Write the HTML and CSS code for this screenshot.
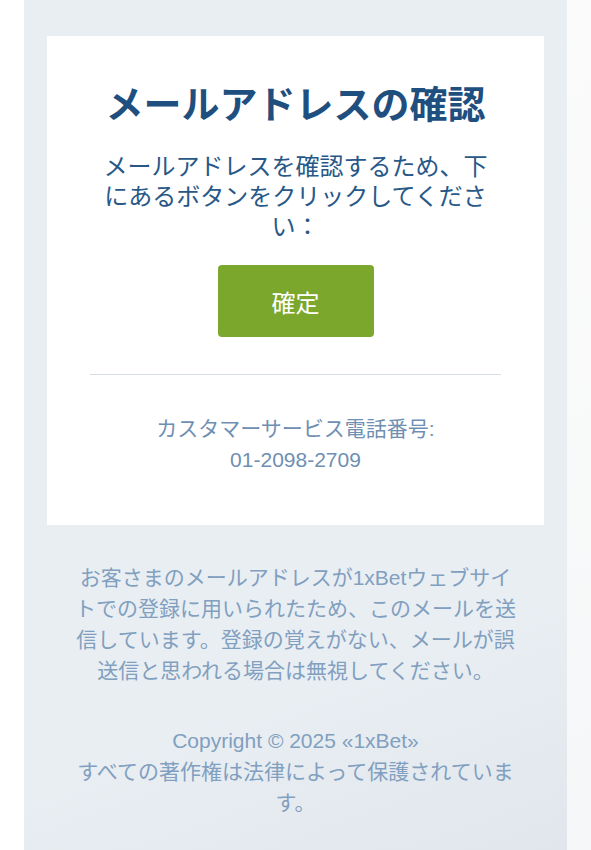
FILE: index.html
```html
<!DOCTYPE html>
<html lang="ja">
<head>
<meta charset="utf-8">
<title>メールアドレスの確認</title>
<link rel="stylesheet" href="styles.css">
</head>
<body>
<div class="page">
  <div class="wrap">
    <div class="card">
      <h1 class="title">メールアドレスの確認</h1>
      <p class="lead">メールアドレスを確認するため、下にあるボタンをクリックしてください：</p>
      <div class="btn-row"><a class="btn" href="#">確定</a></div>
      <hr class="divider">
      <p class="support">カスタマーサービス電話番号:<br>01-2098-2709</p>
    </div>
    <div class="footer">
      <p class="note">お客さまのメールアドレスが1xBetウェブサイトでの登録に用いられたため、このメールを送信しています。登録の覚えがない、メールが誤送信と思われる場合は無視してください。</p>
      <p class="copy">Copyright © 2025 «1xBet»<br>すべての著作権は法律によって保護されています。</p>
    </div>
  </div>
  <div class="side"></div>
</div>
</body>
</html>
```
FILE: styles.css
```css
html, body {
  margin: 0;
  padding: 0;
  background: #ffffff;
}
body {
  font-family: "Liberation Sans", "Noto Sans CJK JP", sans-serif;
}
.page {
  display: flex;
  min-height: 850px;
}
.wrap {
  margin-left: 24px;
  width: 543px;
  min-height: 850px;
  background: linear-gradient(160deg, #e9eef3 0%, #e9eef3 75%, #e1e6ec 100%);
  padding-top: 36px;
  box-sizing: border-box;
}
.side {
  flex: 1;
  background: linear-gradient(180deg, #fbfbfb 0%, #f6f7f8 100%);
}
.card {
  margin: 0 23px;
  background: #ffffff;
  padding: 46px 43px 50px;
  text-align: center;
}
.title {
  margin: 0;
  font-size: 38px;
  line-height: 46px;
  font-weight: 700;
  color: #1f4f7f;
}
.lead {
  margin: 24px 5px 0;
  font-size: 24px;
  line-height: 30px;
  color: #285887;
}
.btn-row {
  display: flex;
  justify-content: center;
  margin-top: 23px;
}
.btn {
  display: flex;
  align-items: center;
  justify-content: center;
  width: 156px;
  height: 72px;
  background: #7ba72d;
  border-radius: 4px;
  color: #ffffff;
  font-size: 24px;
  text-decoration: none;
}
.divider {
  margin: 37px 0 0;
  border: 0;
  border-top: 1px solid #d9dee4;
  height: 0;
}
.support {
  margin: 38px 0 0;
  font-size: 21px;
  line-height: 31px;
  color: #6f8fb2;
}
.footer {
  padding: 37px 50px 40px;
  text-align: center;
  color: #819fbf;
  font-size: 21px;
  line-height: 31px;
}
.note {
  margin: 0;
}
.copy {
  margin: 39px 0 0;
}
```
